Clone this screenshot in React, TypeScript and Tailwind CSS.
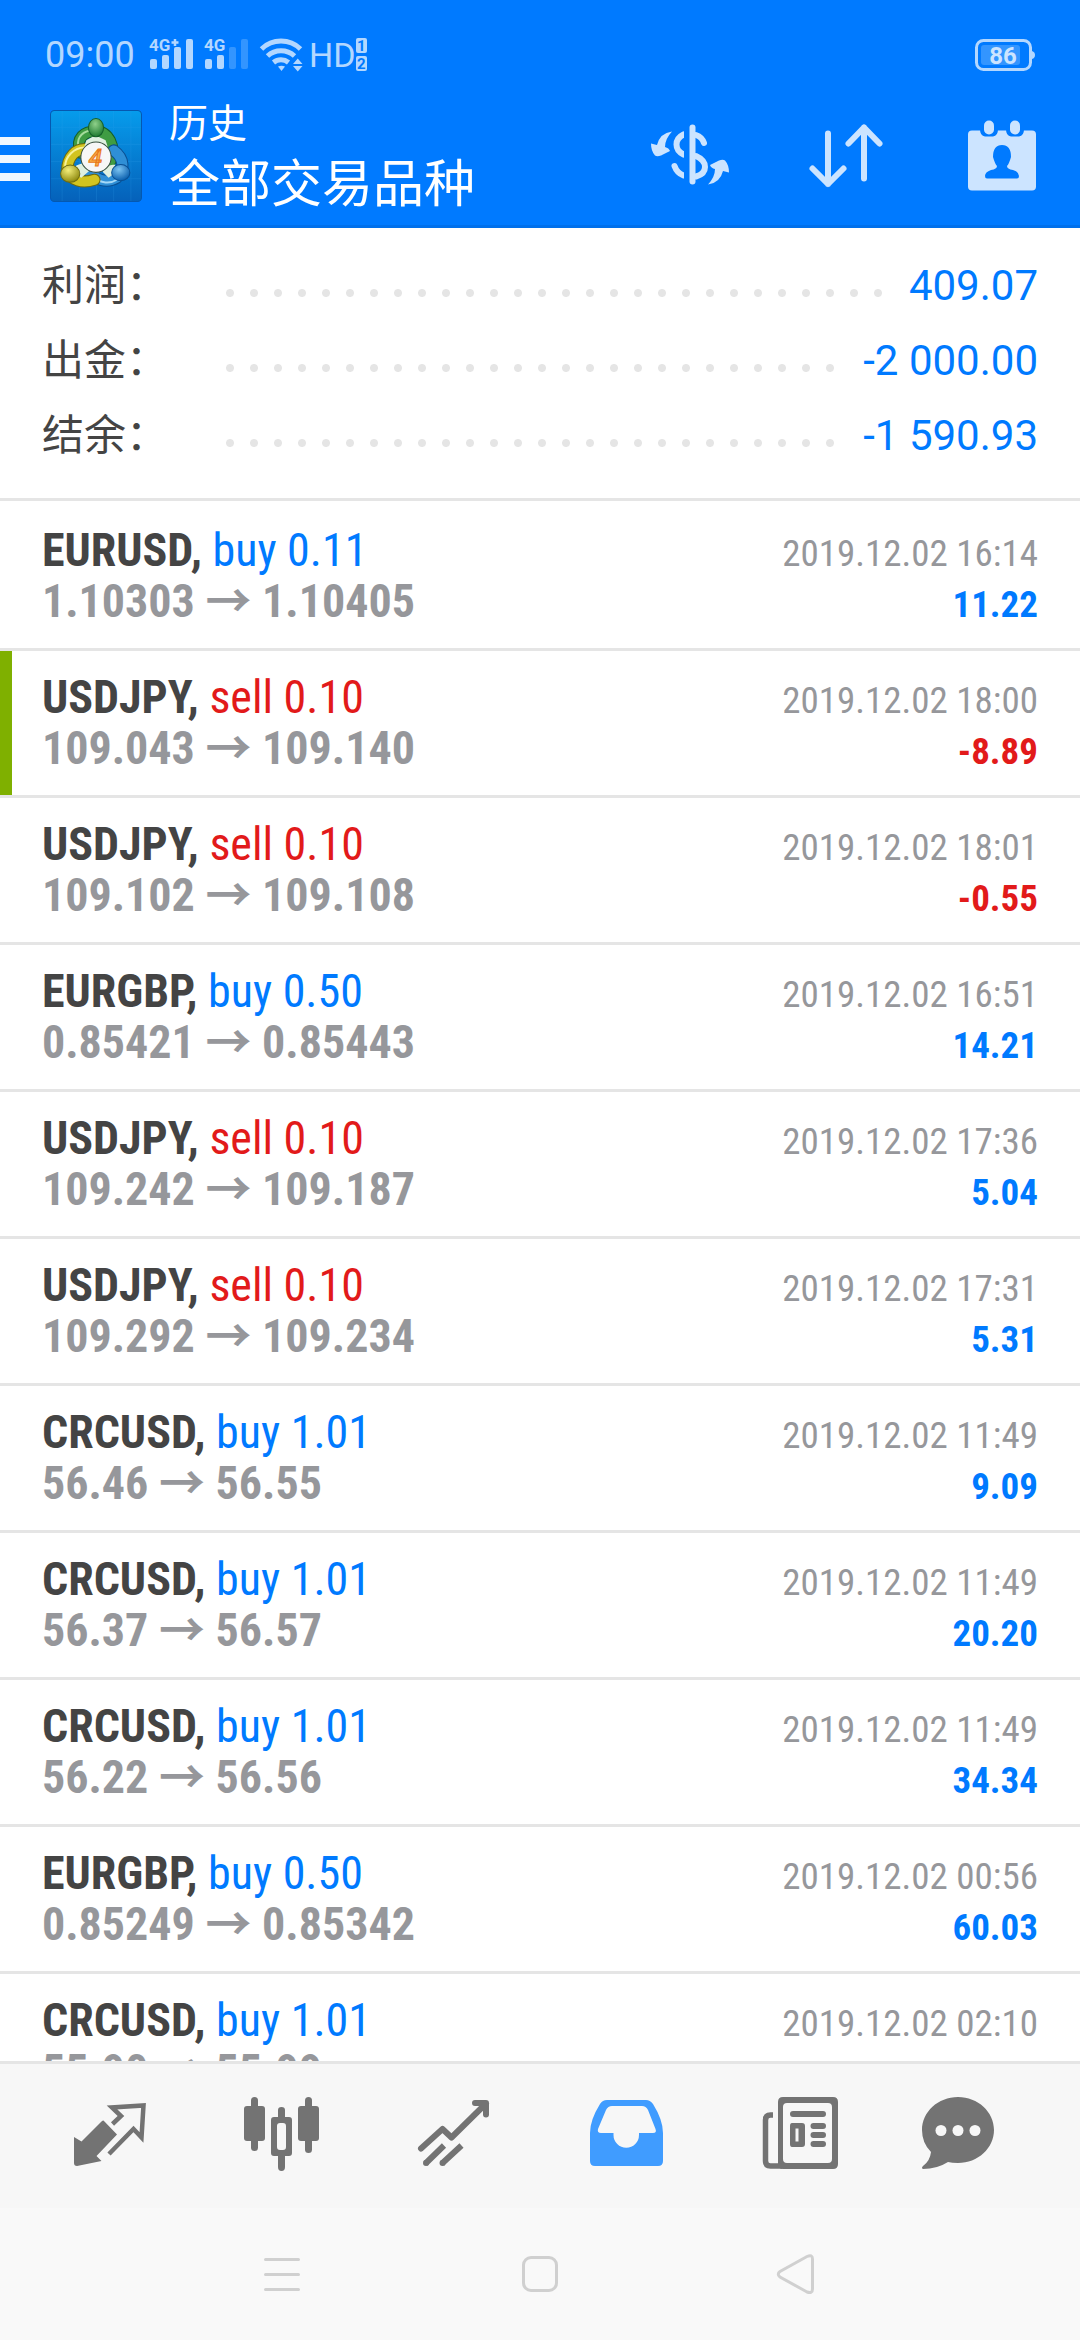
import type { ReactNode } from 'react';

type Deal = {
  symbol: string;
  side: 'buy' | 'sell';
  volume: string;
  open: string;
  close: string;
  time: string;
  profit: string;
  marked?: boolean;
};

const deals: Deal[] = [
  { symbol: 'EURUSD', side: 'buy', volume: '0.11', open: '1.10303', close: '1.10405', time: '2019.12.02 16:14', profit: '11.22' },
  { symbol: 'USDJPY', side: 'sell', volume: '0.10', open: '109.043', close: '109.140', time: '2019.12.02 18:00', profit: '-8.89', marked: true },
  { symbol: 'USDJPY', side: 'sell', volume: '0.10', open: '109.102', close: '109.108', time: '2019.12.02 18:01', profit: '-0.55' },
  { symbol: 'EURGBP', side: 'buy', volume: '0.50', open: '0.85421', close: '0.85443', time: '2019.12.02 16:51', profit: '14.21' },
  { symbol: 'USDJPY', side: 'sell', volume: '0.10', open: '109.242', close: '109.187', time: '2019.12.02 17:36', profit: '5.04' },
  { symbol: 'USDJPY', side: 'sell', volume: '0.10', open: '109.292', close: '109.234', time: '2019.12.02 17:31', profit: '5.31' },
  { symbol: 'CRCUSD', side: 'buy', volume: '1.01', open: '56.46', close: '56.55', time: '2019.12.02 11:49', profit: '9.09' },
  { symbol: 'CRCUSD', side: 'buy', volume: '1.01', open: '56.37', close: '56.57', time: '2019.12.02 11:49', profit: '20.20' },
  { symbol: 'CRCUSD', side: 'buy', volume: '1.01', open: '56.22', close: '56.56', time: '2019.12.02 11:49', profit: '34.34' },
  { symbol: 'EURGBP', side: 'buy', volume: '0.50', open: '0.85249', close: '0.85342', time: '2019.12.02 00:56', profit: '60.03' },
  { symbol: 'CRCUSD', side: 'buy', volume: '1.01', open: '55.90', close: '55.99', time: '2019.12.02 02:10', profit: '9.09' },
];

const totals = [
  { label: '利润：', value: '409.07' },
  { label: '出金：', value: '-2 000.00' },
  { label: '结余：', value: '-1 590.93' },
];

function StatusBar() {
  return (
    <div className="flex h-[110px] items-center justify-between px-[45px] text-[#b3d7ff]">
      <div className="flex items-center gap-3">
        <span className="text-[36px] leading-[42px]">09:00</span>
        <svg className="overflow-visible" width="222" height="38" viewBox="0 0 222 38" fill="currentColor" aria-hidden="true">
          <text x="2" y="15" fontSize="17" fontWeight="700">4G</text>
          <path d="M28 3v7M24.500 6.500h7" stroke="currentColor" strokeWidth="2.500" />
          <rect x="3" y="23" width="7" height="10" rx="2" />
          <rect x="15" y="19" width="7" height="14" rx="2" />
          <rect x="27" y="11" width="7" height="22" rx="2" />
          <rect x="39" y="3" width="7" height="30" rx="2" />
          <text x="57" y="15" fontSize="17" fontWeight="700">4G</text>
          <rect x="58" y="23" width="7" height="10" rx="2" />
          <rect x="70" y="19" width="7" height="14" rx="2" />
          <rect x="82" y="11" width="7" height="22" rx="2" fill="#3395ff" />
          <rect x="94" y="3" width="7" height="30" rx="2" fill="#3395ff" />
          <g fill="none" stroke="currentColor" strokeWidth="5">
            <path d="M114.500 13A28 28 0 0 1 153.500 13" />
            <path d="M120.500 20A20 20 0 0 1 147.500 20" />
            <path d="M126.500 26.500A12 12 0 0 1 141.500 26.500" />
          </g>
          <path d="M131 30.500q3.500-1.500 7 0l-3.500 4.500z" />
          <path d="M146 28h9.500l-4.750-5.500zM146 30h9.500l-4.750 5.500z" />
          <text x="162" y="31" fontSize="34">HD</text>
          <rect x="209" y="2" width="11" height="15" rx="2" />
          <rect x="209" y="20" width="11" height="15" rx="2" />
          <text x="210" y="15" fontSize="15" fontWeight="700" fill="#007aff">1</text>
          <text x="210" y="33" fontSize="15" fontWeight="700" fill="#007aff">2</text>
        </svg>
      </div>
      <svg width="60" height="32" viewBox="0 0 60 32" aria-hidden="true">
        <rect x="1.500" y="1.500" width="54" height="29" rx="7" fill="none" stroke="currentColor" strokeWidth="3" />
        <path d="M57 12q3 1 3 4t-3 4z" fill="currentColor" />
        <rect x="6" y="6" width="39" height="20" rx="3" fill="#3395ff" />
        <text x="28" y="24.500" fontSize="24" fontWeight="700" textAnchor="middle" fill="#cce4ff">86</text>
      </svg>
    </div>
  );
}

function Logo() {
  return (
    <svg className="ml-5" width="92" height="92" viewBox="0 0 91 91" role="img" aria-label="MetaTrader 4">
      <defs>
        <linearGradient id="tile" x1="0" y1="0" x2="0" y2="1">
          <stop offset="0" stopColor="#069cec" />
          <stop offset="1" stopColor="#0561ba" />
        </linearGradient>
        <radialGradient id="green" cx="0.45" cy="0.3" r="0.7">
          <stop offset="0" stopColor="#8fd08a" />
          <stop offset="1" stopColor="#1d7a30" />
        </radialGradient>
        <radialGradient id="yellow" cx="0.4" cy="0.3" r="0.7">
          <stop offset="0" stopColor="#f4ee7a" />
          <stop offset="1" stopColor="#8f8a10" />
        </radialGradient>
        <radialGradient id="blue" cx="0.4" cy="0.3" r="0.7">
          <stop offset="0" stopColor="#7cc4f2" />
          <stop offset="1" stopColor="#0a5fae" />
        </radialGradient>
      </defs>
      <rect x="0.500" y="0.500" width="90" height="90" rx="4" fill="url(#tile)" stroke="#0558b0" />
      <path d="M12 1v89M29 1v89M46 1v89M63 1v89M80 1v89M1 17h89M1 34h89M1 51h89M1 68h89" stroke="#39a8f0" strokeOpacity="0.18" />
      <g fill="none" strokeLinecap="round">
        <path d="M30 42C25 27 35 21 45 21C58 21 65 36 60 50" stroke="#155f2a" strokeWidth="12" />
        <path d="M30 42C25 27 35 21 45 21C58 21 65 36 60 50" stroke="#3f9c43" strokeWidth="10" />
        <path d="M28 36C26 26 34 20 43 20" stroke="#a5dc9c" strokeWidth="2" />
        <path d="M63 40C74 48 74 60 66 67C56 73 44 69 38 60" stroke="#0a4f92" strokeWidth="12" />
        <path d="M63 40C74 48 74 60 66 67C56 73 44 69 38 60" stroke="#2f8fd6" strokeWidth="10" />
        <path d="M43 66C50 73 60 73 66 69" stroke="#a4d8f7" strokeWidth="2" />
        <path d="M38 39C25 37 17 47 17 60C21 70 32 73 44 69" stroke="#6d6a10" strokeWidth="12" />
        <path d="M38 39C25 37 17 47 17 60C21 70 32 73 44 69" stroke="#d3c41f" strokeWidth="10" />
        <path d="M34 37C24 37 15 46 15 56" stroke="#f6f19a" strokeWidth="2" />
      </g>
      <path d="M36 30l9-5 10 5 2 6H34zM26 55l-3 8 8 4 8-7-5-8zM58 55l-6 6 6 6 8-6-2-7z" fill="#dff0e0" />
      <ellipse cx="45.500" cy="17.500" rx="7.500" ry="9" fill="url(#green)" stroke="#155f2a" />
      <ellipse cx="20" cy="63" rx="9.500" ry="8.500" fill="url(#yellow)" stroke="#6d6a10" />
      <ellipse cx="70" cy="62" rx="9" ry="8" fill="url(#blue)" stroke="#0a4f92" />
      <circle cx="45.500" cy="46.700" r="15" fill="#f7f7f7" stroke="#38503f" />
      <text x="45" y="55" fontSize="24" fontWeight="500" fontStyle="italic" textAnchor="middle" fill="#f9b24a" stroke="#e8761a">4</text>
    </svg>
  );
}

function BarButton({ label, children }: { label: string; children: ReactNode }) {
  return (
    <button type="button" aria-label={label} className="text-[#cce4ff]">
      <svg className="overflow-visible" width="78" height="72" viewBox="0 0 78 72" fill="none" stroke="currentColor" strokeWidth="6" strokeLinecap="round" strokeLinejoin="round">
        {children}
      </svg>
    </button>
  );
}

const curvedArrow = 'M21 11.500Q9 13 6 25L0 23.500Q0 31 4 35.500Q6 37 10 35.500L19 31Q18 28 14 27Q14 19 21 11.500z';

function AppBar() {
  return (
    <header className="border-b-[3px] border-[#0070eb] bg-[#007aff]">
      <StatusBar />
      <div className="flex h-[115px] items-center pr-[39px] pb-6">
        <button type="button" aria-label="菜单">
          <svg width="30" height="50" viewBox="0 0 30 50" fill="#f0f7ff">
            <path d="M0 6h30v8H0zM0 24h30v8H0zM0 42h30v8H0z" />
          </svg>
        </button>
        <Logo />
        <h1 className="ml-[27px] flex-1 font-['Noto_Sans_CJK_SC',sans-serif] font-normal text-white">
          <span className="block text-[39px] leading-[48px]">历史</span>
          <span className="block text-[51px] leading-[72px]">全部交易品种</span>
        </h1>
        <div className="flex gap-[78px]">
          <BarButton label="交易品种">
            <path d="M41.500 7.500v54" />
            <path d="M32.500 14.500Q25.500 18 25.500 24.500Q25.500 31 32.500 34.500M32.500 55.500Q26 53 23.500 46M45 15Q51 17 53 23M45 36Q54 40 54 47Q54 54 45 56.500" />
            <path d="M33 8h5v56h-5z" fill="#007aff" stroke="none" />
            <path d={curvedArrow} fill="currentColor" stroke="none" />
            <path d={curvedArrow} transform="rotate(180 39 38)" fill="currentColor" stroke="none" />
          </BarButton>
          <BarButton label="排序">
            <path d="M21 13.500V64M5.500 48.500L21 64L36.500 48.500M57 58.500V7.500M41.500 23.500L57 7.500L72.500 23.500" />
          </BarButton>
          <BarButton label="时间段">
            <g fill="currentColor" stroke="none">
              <rect x="5" y="10.500" width="68" height="60" rx="4" />
              <path d="M17 9h18q0 7-5 7.500h-8q-5-.5-5-7.500zM43 9h18q0 7-5 7.500h-8q-5-.5-5-7.500z" fill="#007aff" />
              <rect x="21" y="0.500" width="10" height="14" rx="5" />
              <rect x="47" y="0.500" width="10" height="14" rx="5" />
              <path d="M39 25Q48 25 48 37Q46 44 44 46Q44 49 50 50Q56 52 56 56Q56 58.500 54 58.500H24Q22 58.500 22 56Q22 52 28 50Q34 49 34 46Q32 44 30 37Q30 25 39 25z" fill="#007aff" />
            </g>
          </BarButton>
        </div>
      </div>
    </header>
  );
}

function Summary() {
  return (
    <dl className="border-b-[3px] border-[#e5e5e5] px-[42px] pt-5 pb-[25px] text-[42px] leading-[75px]">
      {totals.map((row) => (
        <div key={row.label} className="flex items-center">
          <dt className="w-44 text-[#444444]">{row.label}</dt>
          {/* dotted leader, one dot per 24px tile */}
          <span
            aria-hidden="true"
            className="mr-4 h-[75px] flex-1 bg-[radial-gradient(circle_at_12px_45px,#e5e5e5_3.5px,transparent_4.5px)] bg-[length:24px_75px] bg-repeat-x"
          />
          <dd className="text-[#007aff]">{row.value}</dd>
        </div>
      ))}
    </dl>
  );
}

function DealRow({ deal }: { deal: Deal }) {
  return (
    <li className={`flex h-[147px] border-b-[3px] border-[#e5e5e5] ${deal.marked ? 'bg-[linear-gradient(to_right,#7fb000_12px,transparent_12px)]' : ''}`}>
      <div className="flex-1 px-[42px] py-[21px] font-['Roboto_Condensed','Noto_Sans_CJK_SC',sans-serif] leading-[51px]">
        <div className="flex h-[51px] items-baseline justify-between">
          <p className="text-[46px]">
            <span className="font-bold text-[#444444]">{deal.symbol},</span>{' '}
            <span className={deal.side === 'buy' ? 'text-[#007aff]' : 'text-[#e21a1a]'}>
              {deal.side} {deal.volume}
            </span>
          </p>
          <time className="text-[37px] text-[#96979b]">{deal.time}</time>
        </div>
        <div className="flex h-[51px] items-baseline justify-between font-bold">
          <p className="text-[46px] text-[#96979b]">
            {deal.open} → {deal.close}
          </p>
          <p className={`text-[37px] ${deal.profit.startsWith('-') ? 'text-[#e21a1a]' : 'text-[#007aff]'}`}>{deal.profit}</p>
        </div>
      </div>
    </li>
  );
}

const tabs = [
  {
    label: '行情',
    icon: (
      <>
        <path d="M35.500 26.500L49 40.500L28.500 62L33.500 67L9 72Q6 72 6 69V43L13.500 47.500L33.500 27.500Q34.500 26.500 35.500 26.500z" />
        <path d="M44.500 30L53 22L44 13.500L75.500 11.500L73.500 43.500L65.500 35L41 60" fill="none" stroke="currentColor" strokeWidth="4.500" />
      </>
    ),
  },
  {
    label: '图表',
    icon: (
      <>
        <rect x="4" y="12" width="21" height="35" rx="3" />
        <rect x="11" y="3" width="7" height="54" rx="3.500" />
        <path fillRule="evenodd" d="M34 23h15q3 0 3 3v33q0 3-3 3H34q-3 0-3-3V26q0-3 3-3zM40 29q-3 0-3 3v21q0 3 3 3h3q3 0 3-3V32q0-3-3-3z" />
        <path d="M38 24v-8q0-3 3.500-3t3.500 3v8zM38 61v12q0 4 3.500 4t3.500-4V61z" />
        <rect x="58" y="12" width="21" height="35" rx="3" />
        <rect x="65" y="3" width="7" height="56" rx="3.500" />
      </>
    ),
  },
  {
    label: '交易',
    icon: (
      <g fill="none" stroke="currentColor" strokeWidth="6">
        <path d="M9 54.500L30.500 35L39.500 43.500L74 9.500M63 9H74V20.500" strokeLinecap="round" strokeLinejoin="round" />
        <path d="M13.500 69.500L32 51.500M30 69.500L49.500 51.500" />
        <path d="M14 69h.1M30.500 69h.1" strokeLinecap="round" />
      </g>
    ),
  },
  {
    label: '历史',
    active: true,
    icon: (
      <path
        fillRule="evenodd"
        d="M16 10Q18.500 6 23 6H62Q66 6 69 10Q79 26 79 39V67Q79 72 74 72H11Q6 72 6 67V39Q6 26 16 10zM22 16L14 35Q13 39 17 39H29.500V41A12.750 12.750 0 0 0 55 41V39H69Q73 39 71.500 35L64 16Q62 12 58 12H28Q24 12 22 16z"
      />
    ),
  },
  {
    label: '新闻',
    icon: (
      <>
        <path fillRule="evenodd" d="M27 3H77Q82 3 82 8V70Q82 75 77 75H27Q22 75 22 70V8Q22 3 27 3zM31 9Q27 9 27 13V65Q27 69 31 69H72Q76 69 76 65V13Q76 9 72 9z" />
        <path d="M17 21H14.500Q9.500 21 9.500 26V67Q9.500 72 14.500 72H26" fill="none" stroke="currentColor" strokeWidth="5.500" />
        <path d="M37 20H67M57.500 32H67M57.500 41H67M57.500 50H67" stroke="currentColor" strokeWidth="6" strokeLinecap="round" />
        <path fillRule="evenodd" d="M36 29H46Q49 29 49 32V50Q49 53 46 53H36Q34 53 34 50V32Q34 29 36 29zM39.500 34.500V47.500H42.500V34.500z" />
      </>
    ),
  },
  {
    label: '消息',
    icon: (
      <>
        <path d="M30 3C50 3 66 18 66 36S50 69 30 69Q24 69 20 68Q9 75 -5 75Q-7 74 -5 72Q2 67 3 58Q-6 49 -6 36C-6 18 10 3 30 3z" />
        <g fill="#f7f7f7">
          <circle cx="13" cy="36.500" r="5.500" />
          <circle cx="30" cy="36.500" r="5.500" />
          <circle cx="47" cy="36.500" r="5.500" />
        </g>
      </>
    ),
  },
];

function TabBar() {
  return (
    <nav className="flex h-[147px] shrink-0 border-t-[3px] border-[#e5e5e5] bg-[#f7f7f7] px-6">
      {tabs.map((tab) => (
        <button
          key={tab.label}
          type="button"
          aria-label={tab.label}
          className={`flex flex-1 items-center justify-center ${tab.active ? 'text-[#409cff]' : 'text-[#737373]'}`}
        >
          <svg className="overflow-visible" width="84" height="84" viewBox="0 0 84 84" fill="currentColor">
            {tab.icon}
          </svg>
        </button>
      ))}
    </nav>
  );
}

function SystemBar() {
  return (
    <div className="flex h-[132px] shrink-0 items-center justify-center gap-[222px] bg-[#f9f9f9]">
      <button type="button" aria-label="最近任务">
        <svg width="36" height="36" viewBox="0 0 36 36" stroke="#d0d0d0" strokeWidth="3" strokeLinecap="round">
          <path d="M1.500 3.500h33M1.500 18.500h33M1.500 33.500h33" />
        </svg>
      </button>
      <button type="button" aria-label="主页" className="size-9 rounded-[9px] border-[3px] border-[#d0d0d0]" />
      <button type="button" aria-label="返回">
        <svg className="overflow-visible" width="36" height="36" viewBox="0 0 36 36" fill="none" stroke="#d0d0d0" strokeWidth="3">
          <path d="M27 0.500Q32.500 -2 32.500 3V33Q32.500 38 27 36L0 21Q-3.500 18 0 15.500z" />
        </svg>
      </button>
    </div>
  );
}

export default function App() {
  return (
    <div className="flex h-screen flex-col bg-white font-['Roboto','Noto_Sans_CJK_SC',sans-serif]">
      <AppBar />
      <main className="min-h-0 flex-1 overflow-hidden">
        <Summary />
        <ul className="pt-[3px]">
          {deals.map((deal, i) => (
            <DealRow key={i} deal={deal} />
          ))}
        </ul>
      </main>
      <TabBar />
      <SystemBar />
    </div>
  );
}
